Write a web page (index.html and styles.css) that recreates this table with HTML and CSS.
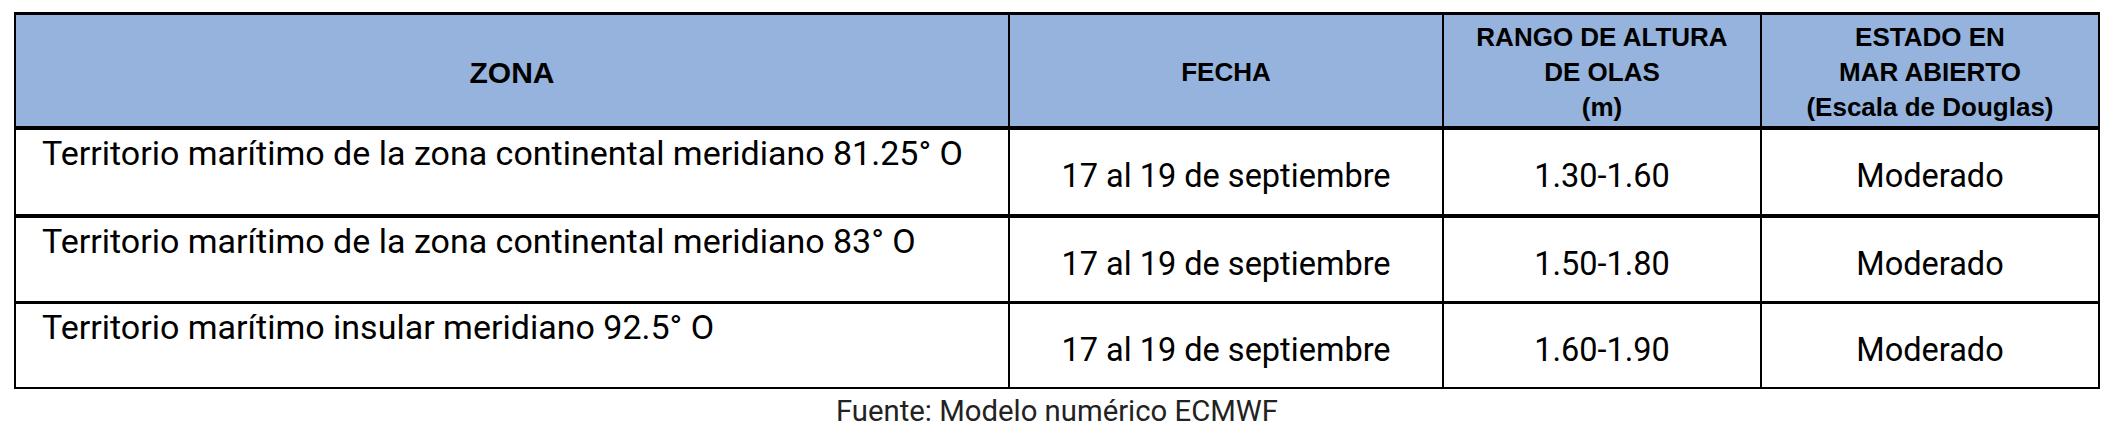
FILE: index.html
```html
<!DOCTYPE html>
<html lang="es">
<head>
<meta charset="utf-8">
<title>Pronóstico de oleaje</title>
<link rel="stylesheet" href="styles.css">
</head>
<body>
<div class="wrap">
  <div class="grid" role="table">
    <div class="cell head head-zona" role="columnheader">ZONA</div>
    <div class="cell head" role="columnheader">FECHA</div>
    <div class="cell head" role="columnheader"><span>RANGO DE ALTURA</span><span>DE OLAS</span><span>(m)</span></div>
    <div class="cell head" role="columnheader"><span>ESTADO EN</span><span>MAR ABIERTO</span><span>(Escala de Douglas)</span></div>

    <div class="cell zona r1">Territorio marítimo de la zona continental meridiano 81.25° O</div>
    <div class="cell val r1">17 al 19 de septiembre</div>
    <div class="cell val r1">1.30-1.60</div>
    <div class="cell val r1">Moderado</div>

    <div class="cell zona r2">Territorio marítimo de la zona continental meridiano 83° O</div>
    <div class="cell val r2">17 al 19 de septiembre</div>
    <div class="cell val r2">1.50-1.80</div>
    <div class="cell val r2">Moderado</div>

    <div class="cell zona r3">Territorio marítimo insular meridiano 92.5° O</div>
    <div class="cell val r3">17 al 19 de septiembre</div>
    <div class="cell val r3">1.60-1.90</div>
    <div class="cell val r3">Moderado</div>
  </div>
  <p class="source">Fuente: Modelo numérico ECMWF</p>
</div>
</body>
</html>
```
FILE: styles.css
```css
* { box-sizing: border-box; }
html, body { margin: 0; padding: 0; background: #ffffff; }
body { font-family: Roboto, "Liberation Sans", Arial, sans-serif; color: #000; }

.wrap {
  padding: 12px 0 0 14px;
  width: 2100px;
}

.grid {
  display: grid;
  grid-template-columns: 992px 434px 318px 338px;
  grid-template-rows: 115px 88px 86px 83px;
  width: 2086px;
  border-top: 3px solid #000;
  border-left: 2px solid #000;
  border-right: 2px solid #000;
  border-bottom: 2px solid #000;
}

.cell {
  border-left: 2px solid #000;
}
.cell:nth-child(4n+1) { border-left: none; }

.head {
  background: #95b3dc;
  border-bottom: 4px solid #000;
  font-family: "Liberation Sans", Arial, sans-serif;
  font-weight: 700;
  font-size: 26px;
  line-height: 35px;
  display: flex;
  flex-direction: column;
  align-items: center;
  justify-content: center;
  text-align: center;
  padding-top: 4px;
}
.head-zona { font-size: 30px; }

.r1 { border-bottom: 4px solid #000; }
.r2 { border-bottom: 3px solid #000; }

.zona {
  font-size: 34px;
  line-height: 40px;
  padding: 3px 0 0 26px;
}

.val {
  font-size: 32.5px;
  line-height: 40px;
  display: flex;
  align-items: center;
  justify-content: center;
  padding-top: 8px;
}

.source {
  margin: 5px 0 0 0;
  width: 2086px;
  text-align: center;
  font-size: 29.3px;
  line-height: 34px;
  color: #222;
}
```
